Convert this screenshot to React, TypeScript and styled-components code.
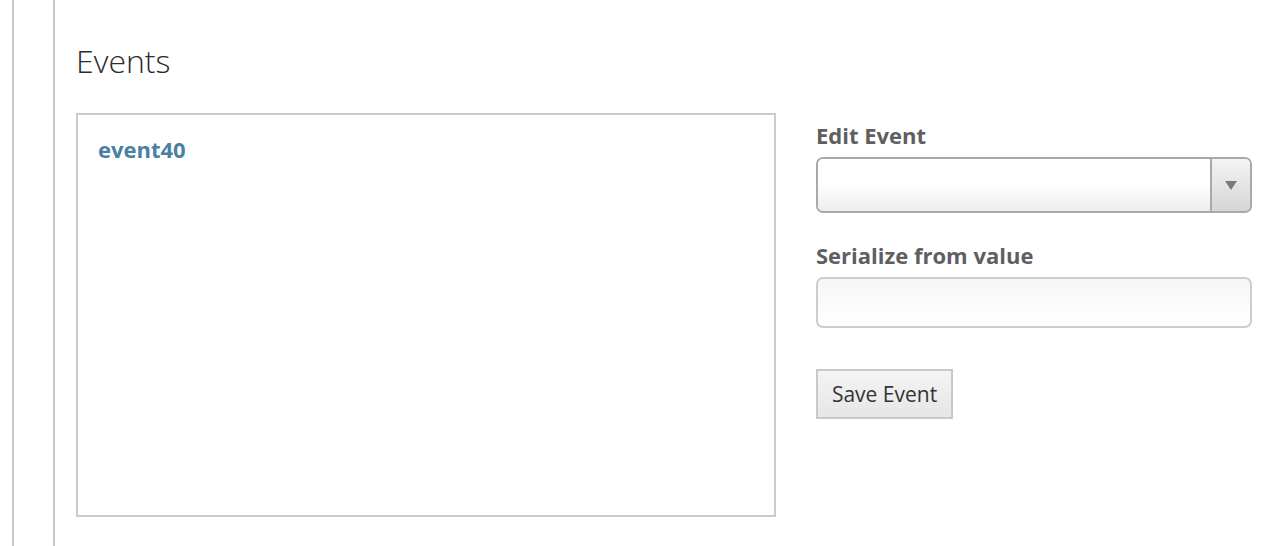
import styled, { createGlobalStyle } from "styled-components";

const GlobalStyle = createGlobalStyle`
  html, body {
    margin: 0;
    padding: 0;
    background: #fff;
    font-family: "Open Sans", "Liberation Sans", sans-serif;
  }
`;

const Page = styled.div`
  display: flex;
  height: 546px;
  padding-left: 12px;
  overflow: hidden;
`;

const Rail = styled.div`
  width: 40px;
  border-left: 2px solid #c8c8c8;
`;

const Main = styled.main`
  flex: 1;
  border-left: 2px solid #c8c8c8;
  padding: 38px 12px 0 21px;
`;

const Heading = styled.h2`
  margin: 0 0 29px;
  font-size: 32px;
  font-weight: 300;
  line-height: 46px;
  color: #2c2c2c;
`;

const Layout = styled.div`
  display: flex;
  gap: 40px;
  align-items: flex-start;
`;

const EventList = styled.ul`
  list-style: none;
  margin: 0;
  padding: 19px 20px;
  width: 700px;
  height: 404px;
  box-sizing: border-box;
  border: 2px solid #cbcbcb;
`;

const EventItem = styled.li`
  font-size: 22px;
  font-weight: 700;
  line-height: 30px;
  color: #4b80a3;
`;

const Form = styled.form`
  width: 436px;
  display: flex;
  flex-direction: column;
  padding-top: 8px;
`;

const Label = styled.label`
  font-size: 22px;
  font-weight: 700;
  color: #5f5f5f;
  line-height: 28px;
  margin-bottom: 8px;
`;

const Select = styled.div`
  display: flex;
  height: 56px;
  box-sizing: border-box;
  border: 2px solid #a9a9a9;
  border-radius: 7px;
  overflow: hidden;
  margin-bottom: 28px;
`;

const SelectValue = styled.div`
  flex: 1;
  background: linear-gradient(#ffffff 50%, #ececec);
`;

const SelectArrow = styled.div`
  width: 38px;
  display: flex;
  align-items: center;
  justify-content: center;
  border-left: 2px solid #a9a9a9;
  background: linear-gradient(#f4f4f4, #d6d6d6);

  &::after {
    content: "";
    border-left: 6px solid transparent;
    border-right: 6px solid transparent;
    border-top: 9px solid #7a7a7a;
  }
`;

const TextInput = styled.input`
  height: 51px;
  box-sizing: border-box;
  border: 2px solid #cdcdcd;
  border-radius: 7px;
  background: linear-gradient(#f6f6f6, #ffffff);
  margin-bottom: 41px;
  outline: none;
`;

const Button = styled.button`
  align-self: flex-start;
  height: 50px;
  width: 137px;
  box-sizing: border-box;
  border: 2px solid #c9c9c9;
  background: linear-gradient(#f4f4f4, #e6e6e6);
  font-family: "Open Sans", "Liberation Sans", sans-serif;
  font-size: 21px;
  color: #333;
  padding: 0;
`;

export default function App() {
  return (
    <>
      <GlobalStyle />
      <Page>
        <Rail />
        <Main>
          <Heading>Events</Heading>
          <Layout>
            <EventList>
              <EventItem>event40</EventItem>
            </EventList>
            <Form onSubmit={(e) => e.preventDefault()}>
              <Label>Edit Event</Label>
              <Select>
                <SelectValue />
                <SelectArrow />
              </Select>
              <Label>Serialize from value</Label>
              <TextInput type="text" />
              <Button type="submit">Save Event</Button>
            </Form>
          </Layout>
        </Main>
      </Page>
    </>
  );
}
